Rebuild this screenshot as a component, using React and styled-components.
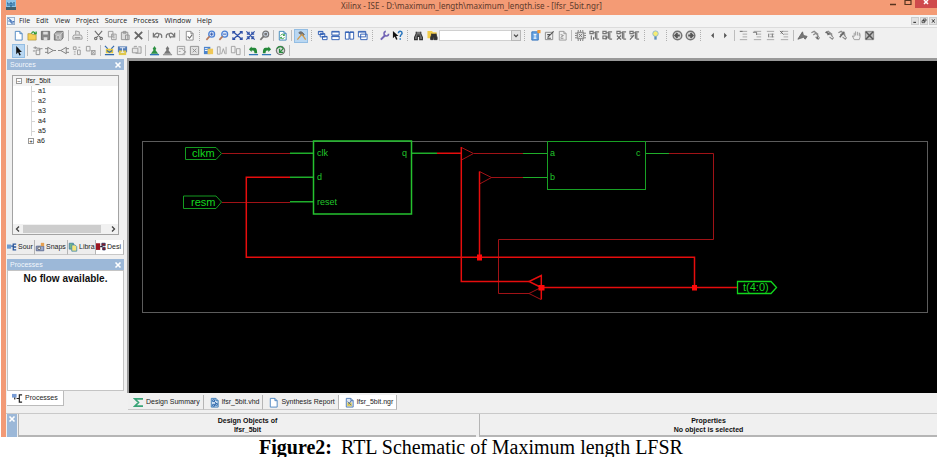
import { useState } from 'react';
import styled, { createGlobalStyle } from 'styled-components';

const sans = `'Liberation Sans', sans-serif`;

/* 12x12 icon drawings */

const page = (stroke, fill = '#fff') => (
  <path d="M2.5 1.5h5l2.5 2.5v7h-7.5z M7.5 1.5v2.5h2.5" fill={fill} stroke={stroke} />
);
const glass = (stroke, handle) => (
  <>
    <circle cx="7.3" cy="4.5" r="3.2" fill="#dbe9fb" stroke={stroke} strokeWidth="1.4" />
    <path d="M5 7L1.5 10.7" stroke={handle} strokeWidth="1.8" />
  </>
);
const arrows = (
  <path
    d="M2 2.5l8 7M10 2.5l-8 7M1 4V1.7h2.5M8.5 1.7H11V4M1 8v2.3h2.5M8.5 10.3H11V8"
    stroke="#2f51a8"
    strokeWidth="1.4"
  />
);
const tree = (mark) => (
  <>
    <path d="M1 1.500h3.500v2.500H1zM4.500 3H7M7 1.500v8M7 2h4M8 10h3M8.500 3v7" stroke="#777" strokeWidth="1.3" />
    <path d={mark} stroke="#666" strokeWidth="1.2" />
  </>
);
const lines = (mark) => (
  <>
    <path d="M2 1.5h8M5 4.5h5M5 7.5h5M2 10.5h8" stroke="#a5a5a5" />
    <path d={mark} stroke="#6f6f6f" />
  </>
);
const flag = (mark) => (
  <>
    <path d="M1.500 3l3-1.5L9 5M3.500 5.500l3-2 3 4M6 7.5l3 2.5 1.500-2" stroke="#8c8c8c" strokeWidth="1.4" />
    <path d={mark} stroke="#666" strokeWidth="1.6" />
  </>
);
const person = (fill, base) => (
  <>
    <path d="M6 1l2 3-1 1.500 3 4H2l3-4L4 4z" fill={fill} />
    <path d="M1 10.500h10" stroke={base} strokeWidth="1.5" />
  </>
);
const round = (arrow) => (
  <>
    <circle cx="6" cy="6" r="4.700" fill="#d8d8d8" stroke="#747474" strokeWidth="1.600" />
    <path d={arrow} stroke="#555" strokeWidth="2" />
  </>
);
const binoculars = (
  <path
    d="M3.5 2v2L1.7 8v2.500h3V7h2.600v3.500h3V8L8.500 4V2M4.700 5.500h2.600"
    fill="#777"
    stroke="#333"
    strokeWidth="1.2"
  />
);

const icons = {
  ise: (
    <>
      <path d="M.5.5h11v11H.5z" fill="#eaf2fb" stroke="#5b7ca8" />
      <path d="M2 2l4 3M2 6h5M6 5v4h4M8 7h3" stroke="#285fae" strokeWidth="1.5" />
    </>
  ),
  newFile: page('#4b86c2'),
  open: (
    <>
      <path d="M1 4h4l1 1h4v6H1z" fill="#f5cf55" stroke="#a88a2a" strokeWidth=".7" />
      <path d="M5 4c1-3 3-2 4 0M7.500 4h2.500V1.500" stroke="#2f9a35" strokeWidth="1.4" />
    </>
  ),
  save: (
    <>
      <path d="M1.500 1.500h9v9h-9z" fill="#888" stroke="#6a6a6a" />
      <path d="M3.500 2h5v3h-5zM4 8h4v3H4z" fill="#ddd" />
    </>
  ),
  saveAll: (
    <>
      <path d="M4 1.500h7v7l-2 2.500H1.500V4.500z" fill="#a0a0a0" stroke="#6d6d6d" />
      <path d="M2 4.500h6.500V11M8.500 4.500L11 1.800M4 6h3v4H4z" stroke="#e2e2e2" strokeWidth=".8" />
    </>
  ),
  print: (
    <>
      <path d="M4 5V1l4 1v3M2 5.500h8l1 2v2.500H1V7z" fill="#e6e6e6" stroke="#999" />
      <path d="M3 8.500h6" stroke="#777" />
    </>
  ),
  cut: (
    <path
      d="M2 1l6 7M10 1L4 8M3 8a1.300 1.300 0 100 2.600A1.300 1.300 0 103 8M9 8a1.300 1.300 0 100 2.600A1.300 1.300 0 109 8"
      stroke="#6f6f6f"
      strokeWidth="1.2"
    />
  ),
  copy: <path d="M1.500 1.500h5v6h-5zM5 4.500h5v6H5zM6.500 6.500h2M6.500 8.500h2" fill="#eee" stroke="#999" />,
  paste: <path d="M1.500 2.500h7v8h-7zM3.500 1.500h3v2h-3zM6 5.500h4v5H6z" fill="#ddd" stroke="#949494" />,
  remove: <path d="M2 2l8 8M10 2l-8 8" stroke="#666" strokeWidth="2" />,
  undo: <path d="M1.500 3v4.500H6M2 7c1.500-4 4-4 5-3s0 4-1.500 4.500M7 4.500c3-1 4 1 3.500 4" stroke="#777" strokeWidth="1.400" />,
  redo: <path d="M10.500 3v4.500H6M10 7C8.500 3 6 3 5 4s0 4 1.500 4.500M5 4.500c-3-1-4 1-3.500 4" stroke="#777" strokeWidth="1.400" />,
  check: (
    <>
      {page('#8a8a8a')}
      <path d="M4 7l2 2 3-4" stroke="#6c6c6c" strokeWidth="1.2" />
    </>
  ),
  zoomIn: (
    <>
      {glass('#4a7fd4', '#b77a5c')}
      <path d="M5.500 4.500h3.600M7.300 2.700v3.600" stroke="#2f51a8" />
    </>
  ),
  zoomOut: (
    <>
      {glass('#4a7fd4', '#b77a5c')}
      <path d="M5.500 4.500h3.600" stroke="#2f51a8" />
    </>
  ),
  zoomFull: arrows,
  zoomBox: (
    <path
      d="M1.500 1.500l9 9M10.500 1.500l-9 9M2 4.500h2.500V2M7.500 2v2.500H10M2 7.500h2.500V10M7.500 10V7.500H10"
      stroke="#2f51a8"
      strokeWidth="1.3"
    />
  ),
  zoomSel: (
    <>
      {glass('#777', '#777')}
      <path d="M5.800 3h3v3h-3z" fill="#777" />
    </>
  ),
  refresh: (
    <>
      {page('#3a84b8')}
      <path d="M4 6c1-2 3-2 4 0M8 4.500V6H6.500M8 8c-1 2-3 2-4 0M4 9.500V8h1.500" stroke="#2d9a41" />
    </>
  ),
  hammer: (
    <>
      <path d="M3 3c2-2 4-1 6 2L7.500 6.500z" fill="#777" stroke="#666" />
      <path d="M6.500 4.500l4 6M6 5l-4.500 5.500" stroke="#d19a4b" strokeWidth="1.4" />
    </>
  ),
  cascade: (
    <path
      d="M1.500 1.500h5v3.500h-5zM3.500 4h5v3.500h-5zM6 7h5v3.500H6zM1.500 2h5M3.500 4.500h5M6 7.500h5"
      fill="#fff"
      stroke="#2c5cb2"
    />
  ),
  tileH: <path d="M2 1.500h8v4H2zM2 6.500h8v4H2zM2 2.200h8M2 7.200h8" fill="#fff" stroke="#2c5cb2" />,
  tileV: <path d="M1.500 2h4v8h-4zM6.500 2h4v8h-4zM1.500 2.700h9" fill="#fff" stroke="#2c5cb2" />,
  windows: <path d="M4 4.500h7v6H4zM1.500 1.500h8v6h-8zM1.500 2.300h8" fill="#fff" stroke="#2c5cb2" />,
  wrench: (
    <>
      <path d="M2 10.500l5-5" stroke="#7365b5" strokeWidth="2.2" />
      <path d="M10.500 4A2.500 2.500 0 117.500 1.500" stroke="#7365b5" strokeWidth="1.7" />
    </>
  ),
  help: (
    <>
      <path d="M1 1v8l2-2 1.500 3.500L6 10 4.500 6.500H7z" fill="#111" />
      <path d="M7 3.500c0-3 4-2.500 4 0 0 1.500-2 1.500-2 4M9 9v1.500" stroke="#2774bd" strokeWidth="1.600" />
    </>
  ),
  find: binoculars,
  findFiles: (
    <>
      <path d="M.5 1h5l1 1.500h4V9H.5z" fill="#f3cd4a" />
      <path d="M5 4v1.500L4 8v2.500h2.700V8h1v2.500H11V8L10 5.500V4" fill="#333" stroke="#333" />
    </>
  ),
  newSource: (
    <>
      <path d="M2 2h7v9H2z" fill="#6da8e4" stroke="#2f71bb" />
      <path d="M4 5h3M5.500 5v4M4 9h3" stroke="#fff" />
      <path d="M8 0h3.500v3.500H8z" fill="#f09b3b" />
    </>
  ),
  edit: (
    <>
      <path d="M1.500 2.500h8v8h-8z" fill="#eee" stroke="#888" />
      <path d="M4 8l6.500-6.500M3.500 5h3M3.500 9h4" stroke="#555" strokeWidth="1.3" />
    </>
  ),
  doc: (
    <>
      {page('#999', '#eee')}
      <path d="M4 5l3 1-3 2M4 9h3" stroke="#888" />
    </>
  ),
  chip: (
    <>
      <path d="M2.500 2.500h7v7h-7z" fill="#ddd" stroke="#777" />
      <path
        d="M3.500 0v2M6 0v2M8.500 0v2M3.500 10v2M6 10v2M8.500 10v2M0 3.500h2M0 6h2M0 8.500h2M10 3.500h2M10 6h2M10 8.500h2M4 4l4 4M8 4L4 8"
        stroke="#777"
      />
    </>
  ),
  tree1: tree('M2.500 6v4.500M5 8v2.500'),
  tree2: tree('M1 6.500h3.500v3H1zM4 10.500L6 7'),
  tree3: tree('M1 6l4.500 4.500M5.500 6L1 10.500'),
  tree4: tree('M1 10.500l4.500-5M1.500 6.500h3'),
  bulb: (
    <>
      <circle cx="6" cy="4" r="3" fill="#f7ed72" stroke="#8db8cf" />
      <path d="M4.700 7h2.600v3.500H4.700z" fill="#5f90b8" />
    </>
  ),
  back: round('M8.500 6H4M6 3.500L3.500 6 6 8.500'),
  next: round('M3.500 6H8M6 3.500L8.500 6 6 8.500'),
  left: <path d="M7.500 3v6L4.500 6z" fill="#555" />,
  right: <path d="M4.500 3v6l3-3z" fill="#555" />,
  lines1: lines('M2 1.500h3'),
  lines2: lines('M1 2.500h4v3'),
  lines3: lines('M4 4v4M8 4v4'),
  lines4: lines('M1 1l4 4M4 1L2 4'),
  mark: <path d="M1 10l5-8 1 4 4 1-2 3-2-2-3 1z" fill="#777" stroke="#666" />,
  flag1: flag('M8 7v3'),
  flag2: flag('M2 2l4 3'),
  flag3: flag('M8 2L3 8'),
  hand: (
    <path
      d="M3.500 10.500L1.500 6.500 3.500 7V3M5 6V1.500M7 6V2M9 6.500V3c1 1 1.500 4 0 7.500H3.500"
      fill="#eee"
      stroke="#9a9a9a"
    />
  ),
  clear: (
    <>
      <path d="M1.500 1.500h9v9h-9z" fill="#bbb" stroke="#888" />
      <path d="M2 2l8 8M10 2l-8 8" stroke="#555" strokeWidth="1.600" />
    </>
  ),
  cursor: <path d="M3.500 1v9l2-2 1.500 3.500 1.500-.7L7 7.500h2.700z" fill="#111" />,
  port: <path d="M1.500 3h4M3.500 1.500v3M5 3.500h3.500v2H4.500v5h4V4M1 6.500h2.500M9 4h2.500" stroke="#8a8a8a" />,
  gateR: <path d="M3 2.500l6 3.500-6 3.500zM0 4h3M0 8h3M9 6h3" fill="#eee" stroke="#7c7c7c" />,
  gateL: <path d="M9 2.500L3 6l6 3.500zM12 4H9M12 8H9M3 6H0" fill="#eee" stroke="#7c7c7c" />,
  blocks: <path d="M1.500 2h3v3h-3zM6 5.500h3v5H6zM2 7.500h2M7 2.500h2M2 10h2" stroke="#999" />,
  blocksX: <path d="M1.500 1.500h4v5h-4zM7 6h4v4.500H7zM7 6l4 4.500M11 6l-4 4.500" stroke="#999" />,
  netUp: (
    <>
      <path d="M2 4h8v5H2z" fill="#e4c941" />
      <path d="M1 1l3 3M11 1L8 4M1 10.500h10M3 6l3 2 3-2" stroke="#3269ae" strokeWidth="1.300" />
    </>
  ),
  netBox: (
    <>
      <path d="M1 1.500h10V8H1z" fill="#557fb9" />
      <path d="M2 6h8v5H2z" fill="#e1c84b" />
      <path d="M3 3h6M6 3v5M4 8h4" stroke="#e8eff8" />
    </>
  ),
  folder: <path d="M1.500 3.500h6v5h-6zM3.500 2.500v-1h3M8 2h3v7H5" fill="#e7e7e7" stroke="#999" />,
  manGreen: person('#2d9143', '#3278b8'),
  manGray: person('#777', '#999'),
  form1: <path d="M1.500 1.500h8v9h-8zM3 4h5M3 7h2M7 5l4 3M7 10l4-3" fill="#eee" stroke="#9b9b9b" />,
  form2: <path d="M1.500 1.500h9v9h-9zM4 4l4 4M8 4L4 8" fill="#e1e1e1" stroke="#8d8d8d" />,
  form3: (
    <>
      <path d="M1 2h7v8H1z" fill="#4a83ce" />
      <path d="M5 4h6v6H5z" fill="#efc757" />
      <path d="M2 4h3M2 6h3" stroke="#fff" />
    </>
  ),
  bars1: <path d="M1.500 2h3v8h-3zM6 10l2-6 2 6M11 2v8" stroke="#a0a0a0" />,
  bars2: <path d="M1.500 1.500h4v7h-4zM7 4h4v6.500H7z" stroke="#a0a0a0" />,
  treeUp: (
    <>
      <path d="M1 4.500L4 1.500V3h3c2 0 3 2 3 6H7c0-2-.5-3-1.500-3H4v1.500z" fill="#238838" />
      <path d="M1 10.500h10" stroke="#3278b8" strokeWidth="1.400" />
    </>
  ),
  treeDown: (
    <>
      <path d="M11 4.500L8 1.500V3H5C3 3 2 5 2 9h3c0-2 .5-3 1.500-3H8v1.500z" fill="#238838" />
      <path d="M1 10.500h10" stroke="#3278b8" strokeWidth="1.400" />
    </>
  ),
  globe: (
    <>
      <circle cx="6" cy="6" r="4.500" fill="#ddd" stroke="#777" strokeWidth="1.400" />
      <path d="M2 4c2-3 6-3 7 0L5 8M5 4v4h4" stroke="#278b3c" strokeWidth="1.400" />
    </>
  ),
  sources: (
    <>
      <path d="M0 3h5v5H0z" fill="#6e9bd0" />
      <path d="M5 5h2M11 2.500H7.500v7H11M8 6h3" stroke="#2b579c" strokeWidth="1.600" />
    </>
  ),
  camera: (
    <>
      <path d="M1.500 5h9v5.500h-9z" fill="#9ba9cc" stroke="#56648c" />
      <circle cx="5" cy="7.500" r="1.700" fill="#eee" stroke="#555" />
      <path d="M7 1h4v4H7z" fill="#e6a052" />
    </>
  ),
  library: (
    <>
      <path d="M1.500 1.500h5v7h-5z" fill="#74b886" stroke="#3c79a1" />
      <path d="M4.500 3.500h4l2 2v5.500h-6z" fill="#f4e47c" stroke="#428cae" />
    </>
  ),
  design: (
    <>
      <path d="M0 1.500h5v8H0z" fill="#9b1620" />
      <path d="M5 5.500h3" stroke="#223" strokeWidth="1.500" />
      <path d="M7 1.500h4v3H7zM8 6.500h3v3H8z" fill="#9b1620" stroke="#27315d" />
    </>
  ),
  process: (
    <>
      <path d="M0 1h5v4H0z" fill="#769bd5" />
      <path d="M11 2H8v8h3M5 6h3M3 5v2" stroke="#222" strokeWidth="1.300" />
    </>
  ),
  sigma: <path d="M10 3V2H2l4 4-4 4h8V9" stroke="#39a477" strokeWidth="1.800" />,
  vhd: (
    <>
      {page('#3979b5', '#d5e6f7')}
      <path d="M4 3h2v2H4zM6 5l2 2M7 7h2v2H7zM4 8h2v2H4z" stroke="#245fa5" />
    </>
  ),
  ngr: (
    <>
      {page('#4b78b2', '#dce6f4')}
      <path d="M3.500 6h5v4h-5z" fill="#e3cf58" />
      <path d="M4 5l4 4M8 4L5 8" stroke="#4b6798" />
    </>
  ),
};

const Icon = ({ name }) => (
  <IconSvg viewBox="0 0 12 12" fill="none" aria-hidden="true">
    {icons[name]}
  </IconSvg>
);

const mainTools = [
  'newFile', 'open', 'save', 'saveAll', '|', 'print', ':',
  'cut', 'copy', 'paste', 'remove', '|', 'undo', 'redo', '|', 'check', ':',
  'zoomIn', 'zoomOut', 'zoomFull', 'zoomBox', 'zoomSel', '|', 'refresh', '|', '*hammer', ':',
  'cascade', 'tileH', 'tileV', 'windows', ':', 'wrench', 'help', ':',
  'find', 'findFiles', 'search', ':', 'newSource', 'edit', 'doc', '|',
  'chip', 'tree1', 'tree2', 'tree3', 'tree4', ':', 'bulb', ':',
  'back', 'next', ':', 'left', 'right', '|',
  'lines1', 'lines2', 'lines3', 'lines4', '|',
  'mark', 'flag1', 'flag2', 'flag3', 'hand', 'clear',
];

const schematicTools = [
  '*cursor', '|', 'port', 'gateR', 'gateL', 'blocks', 'blocksX', '|',
  'netUp', 'netBox', 'folder', '|',
  'manGreen', 'manGray', 'form1', 'form2', 'form3', 'bars1', 'bars2', '|',
  'treeUp', 'treeDown', 'globe', '|',
];

const ToolRow = ({ items, label, width }) => (
  <Toolbar role="toolbar" aria-label={label} $width={width}>
    {items.map((item, i) => {
      if (item === '|') return <Separator key={i} />;
      if (item === ':') return <Grip key={i} />;
      if (item === 'search') {
        return (
          <Combo key={i}>
            <select aria-label="Find text" />
            <svg viewBox="0 0 10 10" fill="none" aria-hidden="true">
              <path d="M2.500 4L5 6.500 7.500 4" stroke="#444" strokeWidth="1.500" />
            </svg>
          </Combo>
        );
      }
      const name = item.replace('*', '');
      return (
        <ToolButton key={i} type="button" aria-label={name} $active={item !== name}>
          <Icon name={name} />
        </ToolButton>
      );
    })}
  </Toolbar>
);

const DockHeader = ({ title }) => (
  <PanelHeader>
    <h2>{title}</h2>
    <CloseButton type="button" aria-label={`Close ${title}`}>
      <svg viewBox="0 0 8 8" aria-hidden="true">
        <path d="M1.500 1.500l5 5M6.500 1.500l-5 5" stroke="#fff" strokeWidth="1.600" />
      </svg>
    </CloseButton>
  </PanelHeader>
);

const Schematic = () => (
  <Canvas viewBox="129 61 808 332" fill="none" role="img" aria-label="lfsr_5bit schematic">
    <rect x="142.500" y="141.500" width="785" height="171" stroke="#5c5c5c" />

    {/* thin nets */}
    <g stroke="#a01216">
      <path d="M222 153.500H290M222 202.500H290" />
      <path d="M474 153.500H523M491 177.500H523" />
      <path d="M669 153.500H713.500V239.500H498.500V293.500H529" />
      <path d="M461.500 147.500L473.500 153.500L461.500 160M479.500 171.500L491.500 177.500L479.500 184" />
      <path d="M541 287.500L529 293.500L541 299.500" />
    </g>

    {/* buses */}
    <g stroke="#e60d0d" strokeWidth="1.500">
      <path d="M437 153.300H461.300M461.300 147V281.500H529" />
      <path d="M290 177.300H246.300V257.300H694.500V287.500" />
      <path d="M479.500 171.500V257M541 287.500H737" />
      <path d="M541.300 299.500V275.500L529 281.500L541.300 287.500" />
    </g>
    <path d="M477 254.500h5v6h-5zM538.500 285h6v5.500h-6zM692 285h5v5.500h-5z" fill="#ff0a0a" />

    {/* pins */}
    <g stroke="#1fae2b">
      <path d="M290 153.300H313M290 177.300H313M290 201.700H313M412 153.300H437" strokeWidth="1.500" />
      <path d="M523 153.500H547M523 177.500H547M646 153.500H669" />
      <rect x="313.500" y="141" width="98" height="73" stroke="#25c22f" strokeWidth="1.500" />
      <rect x="547.500" y="141.500" width="98" height="48" stroke="#18a024" />
      <path
        d="M185.500 147.500H216L221.500 153.500L216 159.500H185.500zM183.500 196H216L221.500 202L216 208.500H183.500z"
        stroke="#149a20"
      />
      <path d="M737.500 281.500H771L776.500 287.500L771 293.500H737.500z" stroke="#12d51d" strokeWidth="1.300" />
    </g>

    <g fill="#14d81f" fontSize="11">
      <text x="192" y="157">clkm</text>
      <text x="191" y="206">resm</text>
      <text x="743" y="291">t(4:0)</text>
    </g>
    <g fill="#20c52b" fontSize="9">
      <text x="317" y="156">clk</text>
      <text x="317" y="180">d</text>
      <text x="317" y="205">reset</text>
      <text x="402" y="156">q</text>
      <text x="550" y="156">a</text>
      <text x="550" y="180">b</text>
      <text x="636" y="156">c</text>
    </g>
  </Canvas>
);

const sourceTabs = [
  ['sources', 'Sour'],
  ['camera', 'Snaps'],
  ['library', 'Libra'],
  ['design', 'Desi'],
];

const documents = [
  ['sigma', 'Design Summary'],
  ['vhd', 'lfsr_5bit.vhd'],
  ['newFile', 'Synthesis Report'],
  ['ngr', 'lfsr_5bit.ngr'],
];

const App = () => {
  const [source, setSource] = useState('Desi');
  const [doc, setDoc] = useState('lfsr_5bit.ngr');

  return (
    <>
      <GlobalStyle />
      <Figure>
        <Window>
          <TitleBar>
            <AppIcon viewBox="0 0 10 10" aria-hidden="true">
              <path d="M0 0h10v9H0z" fill="#8fc4e8" />
              <path d="M0 7h10v3H0z" fill="#44616f" />
              <path d="M1 3h1v3M4 3h2v3H4zM8 2v4" stroke="#17588c" fill="none" />
            </AppIcon>
            <h1>Xilinx - ISE - D:\maximum_length\maximum_length.ise - [lfsr_5bit.ngr]</h1>
            <WindowButtons>
              <WindowButton type="button" aria-label="Minimize">
                <svg viewBox="0 0 10 8">
                  <path d="M2 4.500h6" stroke="#57341f" strokeWidth="1.500" />
                </svg>
              </WindowButton>
              <WindowButton type="button" aria-label="Maximize">
                <svg viewBox="0 0 10 8">
                  <path d="M2 0v4.500h6V0M2 .5h6" stroke="#57341f" strokeWidth="1.200" fill="none" />
                </svg>
              </WindowButton>
              <WindowButton type="button" aria-label="Close" $close>
                <svg viewBox="0 0 10 8">
                  <path d="M3 0l4 4M7 0L3 4" stroke="#fff" strokeWidth="1.500" />
                </svg>
              </WindowButton>
            </WindowButtons>
          </TitleBar>

          <MenuBar>
            <Icon name="ise" />
            {['File', 'Edit', 'View', 'Project', 'Source', 'Process', 'Window', 'Help'].map((m) => (
              <button type="button" key={m}>{m}</button>
            ))}
            <ChildButtons>
              <button type="button" aria-label="Minimize document">
                <svg viewBox="0 0 9 9">
                  <path d="M2 6.500h4" stroke="#222" strokeWidth="1.500" />
                </svg>
              </button>
              <button type="button" aria-label="Restore document">
                <svg viewBox="0 0 9 9">
                  <path d="M3.500 1.500h4v3h-4zM1.500 4h4v3h-4z" stroke="#222" fill="none" />
                </svg>
              </button>
              <button type="button" aria-label="Close document">
                <svg viewBox="0 0 9 9">
                  <path d="M3 2l4 5M7 2L3 7" stroke="#222" strokeWidth="1.300" />
                </svg>
              </button>
            </ChildButtons>
          </MenuBar>

          <ToolRow items={mainTools} label="Standard" width={864} />
          <ToolRow items={schematicTools} label="Schematic" width={280} />

          <Workspace>
            <Sidebar>
              <Panel $grow={4}>
                <DockHeader title="Sources" />
                <TreeBox>
                  <Tree>
                    <li>
                      <TreeRoot>
                        <Toggle type="button" aria-label="Collapse lfsr_5bit">−</Toggle>
                        lfsr_5bit
                      </TreeRoot>
                      <Branch>
                        {['a1', 'a2', 'a3', 'a4', 'a5'].map((n) => <Leaf key={n}>{n}</Leaf>)}
                        <Leaf $last>
                          <Toggle type="button" aria-label="Expand a6">+</Toggle>
                          a6
                        </Leaf>
                      </Branch>
                    </li>
                  </Tree>
                  <ScrollBar>
                    <button type="button" aria-label="Scroll left">
                      <svg viewBox="0 0 8 8">
                        <path d="M5 1.500L2.500 4 5 6.500" stroke="#444" strokeWidth="1.300" fill="none" />
                      </svg>
                    </button>
                    <Thumb />
                    <button type="button" aria-label="Scroll right">
                      <svg viewBox="0 0 8 8">
                        <path d="M3 1.500L5.500 4 3 6.500" stroke="#444" strokeWidth="1.300" fill="none" />
                      </svg>
                    </button>
                  </ScrollBar>
                </TreeBox>
                <SideTabs>
                  {sourceTabs.map(([icon, name]) => (
                    <SideTab key={name} type="button" $active={name === source} onClick={() => setSource(name)}>
                      <Icon name={icon} />
                      {name}
                    </SideTab>
                  ))}
                </SideTabs>
              </Panel>
              <Panel $grow={3}>
                <DockHeader title="Processes" />
                <ProcessBox>No flow available.</ProcessBox>
                <ProcessTab type="button">
                  <Icon name="process" />
                  Processes
                </ProcessTab>
              </Panel>
            </Sidebar>

            <Editor>
              <CanvasFrame>
                <Schematic />
              </CanvasFrame>
              <DocTabs>
                {documents.map(([icon, name]) => (
                  <DocTab key={name} type="button" $active={name === doc} onClick={() => setDoc(name)}>
                    <Icon name={icon} />
                    {name}
                  </DocTab>
                ))}
              </DocTabs>
            </Editor>
          </Workspace>

          <Inspector>
            <InspectorStrip>
              <CloseButton type="button" aria-label="Close inspector">
                <svg viewBox="0 0 8 8" aria-hidden="true">
                  <path d="M1.500 1.500l5 5M6.500 1.500l-5 5" stroke="#fff" strokeWidth="1.600" />
                </svg>
              </CloseButton>
            </InspectorStrip>
            <InspectorPane>Design Objects of<br />lfsr_5bit</InspectorPane>
            <InspectorPane>Properties<br />No object is selected</InspectorPane>
          </Inspector>
        </Window>
        <figcaption><b>Figure2:</b> RTL Schematic of Maximum length LFSR</figcaption>
      </Figure>
    </>
  );
};

const GlobalStyle = createGlobalStyle`
  * {
    box-sizing: border-box;
  }

  body {
    margin: 0;
    background: #fff;
    overflow-x: hidden;
  }

  button {
    margin: 0;
    padding: 0;
    border: 0;
    background: none;
    color: inherit;
    font: inherit;
  }

  svg {
    display: block;
  }
`;

const Figure = styled.figure`
  margin: 0;
  padding: 0 9px 0 1px;

  figcaption {
    padding-left: 4px;
    font: 20px/20px 'Liberation Serif', serif;
    text-align: center;
    color: #000;
  }

  b {
    margin-right: 4px;
  }
`;

const Window = styled.div`
  border-left: 5px solid #f29a76;
  background: #f0f0f0;
  color: #222;
  font: 7px/10px ${sans};
`;

const TitleBar = styled.header`
  display: grid;
  grid-template-columns: 1fr auto 1fr;
  height: 15px;
  background: #f49b75;

  h1 {
    margin: 0;
    font: 8px/12px 'Noto Sans', sans-serif;
    color: #5c3a2c;
    white-space: nowrap;
  }
`;

const AppIcon = styled.svg`
  width: 10px;
  height: 10px;
`;

const WindowButtons = styled.div`
  display: flex;
  justify-content: flex-end;
`;

const WindowButton = styled.button`
  display: flex;
  justify-content: center;
  width: ${(p) => (p.$close ? '22px' : '15px')};
  height: 8px;
  background: ${(p) => (p.$close ? '#cf4a4c' : 'none')};

  svg {
    width: 10px;
    height: 8px;
  }
`;

const IconSvg = styled.svg`
  flex: none;
  width: 11px;
  height: 11px;
`;

const MenuBar = styled.nav`
  display: flex;
  align-items: center;
  gap: 6px;
  height: 13px;
  padding-left: 1px;
  background: #f4f4f4;
  border-bottom: 1px solid #dcdcdc;
  font: 7px/12px 'Open Sans', sans-serif;
  overflow: hidden;

  > svg {
    width: 8px;
    height: 8px;
    margin-right: -2px;
  }
`;

const ChildButtons = styled.div`
  display: flex;
  gap: 1px;
  margin-left: auto;

  button {
    width: 8px;
    height: 8px;
    background: #e2e2e2;
    border: 1px solid #ccc;
  }
`;

const Toolbar = styled.div`
  display: flex;
  align-items: center;
  height: 15px;
  max-width: ${(p) => p.$width + 6}px;
  padding-left: 6px;
`;

const ToolButton = styled.button`
  display: flex;
  flex: 1 1 0;
  min-width: 0;
  align-items: center;
  justify-content: center;
  height: 14px;
  background: ${(p) => (p.$active ? '#b9d7f2' : 'none')};
  box-shadow: ${(p) => (p.$active ? 'inset 0 0 0 1px #93bde3' : 'none')};
`;

const Separator = styled.span`
  flex: none;
  width: 1px;
  height: 11px;
  margin: 0 2px;
  background: #bdbdbd;
`;

const Grip = styled.span`
  flex: none;
  height: 11px;
  margin: 0 4px 0 3px;
  border-left: 1px dotted #b0b0b0;
`;

const Combo = styled.div`
  position: relative;
  flex: none;
  width: 82px;

  select {
    display: block;
    appearance: none;
    width: 100%;
    height: 11px;
    padding: 0;
    border: 1px solid #d0d0d0;
    border-radius: 0;
    background: #fff;
    font: inherit;
  }

  svg {
    position: absolute;
    top: 0;
    right: 0;
    width: 10px;
    height: 11px;
    background: #e3e3e3;
    border: 1px solid #b8b8b8;
    pointer-events: none;
  }
`;

const Workspace = styled.div`
  display: flex;
`;

const Sidebar = styled.aside`
  display: flex;
  flex: none;
  flex-direction: column;
  gap: 4px;
  width: 119px;
  padding: 1px 1px 7px;
`;

const Panel = styled.section`
  display: flex;
  flex: ${(p) => p.$grow} 1 0;
  flex-direction: column;
  min-height: 0;
`;

const PanelHeader = styled.div`
  display: flex;
  align-items: center;
  justify-content: space-between;
  height: 11px;
  padding: 0 2px 0 3px;
  background: #9cb8d8;

  h2 {
    margin: 0;
    font: 7px/10px ${sans};
    color: #f2f7fc;
  }
`;

const CloseButton = styled.button`
  width: 8px;
  height: 8px;
`;

const TreeBox = styled.div`
  display: flex;
  flex: 1;
  flex-direction: column;
  justify-content: space-between;
  margin: 5px;
  background: #fff;
  border: 1px solid #a3a3a3;
`;

const Tree = styled.ul`
  margin: 0;
  padding: 0;
  list-style: none;
`;

const TreeRoot = styled.div`
  display: flex;
  align-items: center;
  gap: 4px;
  padding-left: 3px;
  background: #f3f3f3;
`;

const Toggle = styled.button`
  width: 6px;
  height: 6px;
  border: 1px solid #999;
  background: #fff;
  font-size: 6px;
  line-height: 4px;
`;

const Branch = styled.ul`
  margin: 0 0 0 18px;
  padding: 0;
  list-style: none;
`;

const Leaf = styled.li`
  display: flex;
  align-items: center;
  gap: 3px;
  height: 10px;
  margin-left: ${(p) => (p.$last ? '-3px' : '0')};
  border-left: ${(p) => (p.$last ? '0' : '1px solid #d5d5d5')};

  &::before {
    content: '';
    display: ${(p) => (p.$last ? 'none' : 'block')};
    width: 3px;
    border-top: 1px solid #d5d5d5;
  }
`;

const ScrollBar = styled.div`
  display: flex;
  align-items: center;
  height: 10px;
  padding: 0 1px;
  background: #f1f1f1;

  button {
    width: 8px;
    height: 8px;
  }
`;

const Thumb = styled.div`
  flex: 1;
  height: 8px;
  margin: 0 8px 0 1px;
  background: #cdcdcd;
`;

const SideTabs = styled.div`
  display: grid;
  grid-template-columns: 1fr 33px 1fr 1fr;
  height: 15px;
`;

const SideTab = styled.button`
  display: flex;
  align-items: center;
  gap: 1px;
  min-width: 0;
  white-space: nowrap;
  background: ${(p) => (p.$active ? '#fff' : '#ededed')};
  border-right: 1px solid #b5b5b5;
  border-bottom: 1px solid #c8c8c8;

  svg {
    width: 10px;
    height: 10px;
  }
`;

const ProcessBox = styled.div`
  flex: 1;
  background: #fff;
  border: 1px solid #c4c4c4;
  font: bold 10px/15px ${sans};
  text-align: center;
  color: #111;
`;

const ProcessTab = styled.button`
  display: flex;
  align-items: center;
  align-self: flex-start;
  gap: 2px;
  height: 15px;
  padding: 0 5px;
  background: #fff;
  border-right: 1px solid #bbb;
  border-bottom: 1px solid #bbb;
`;

const Editor = styled.main`
  flex: 1;
  min-width: 0;
  padding-left: 2px;
`;

const CanvasFrame = styled.div`
  background: #000;
  border-top: 3px solid #999;
  border-left: 2px solid #999;
`;

const Canvas = styled.svg`
  width: 100%;
  height: auto;
  font-family: ${sans};
`;

const DocTabs = styled.div`
  display: flex;
  align-items: flex-start;
  height: 20px;
  padding: 2px 0 0 1px;
`;

const DocTab = styled.button`
  display: flex;
  align-items: center;
  gap: 2px;
  height: 15px;
  padding: 0 3px 0 5px;
  background: ${(p) => (p.$active ? '#fff' : '#efefef')};
  border-right: 1px solid #b5b5b5;
  border-bottom: 1px solid #c8c8c8;
`;

const Inspector = styled.footer`
  display: flex;
  gap: 3px;
  padding-left: 1px;
  border-top: 1px solid #c9c9c9;
`;

const InspectorStrip = styled.div`
  width: 10px;
  margin-right: -2px;
  padding: 1px;
  background: #9cb8d8;
`;

const InspectorPane = styled.div`
  flex: 1 1 0;
  padding: 2px 0 1px;
  border: solid #b5b5b5;
  border-width: 0 0 2px 1px;
  font: bold 7px/9px ${sans};
  text-align: center;
  color: #111;
`;

export default App;
